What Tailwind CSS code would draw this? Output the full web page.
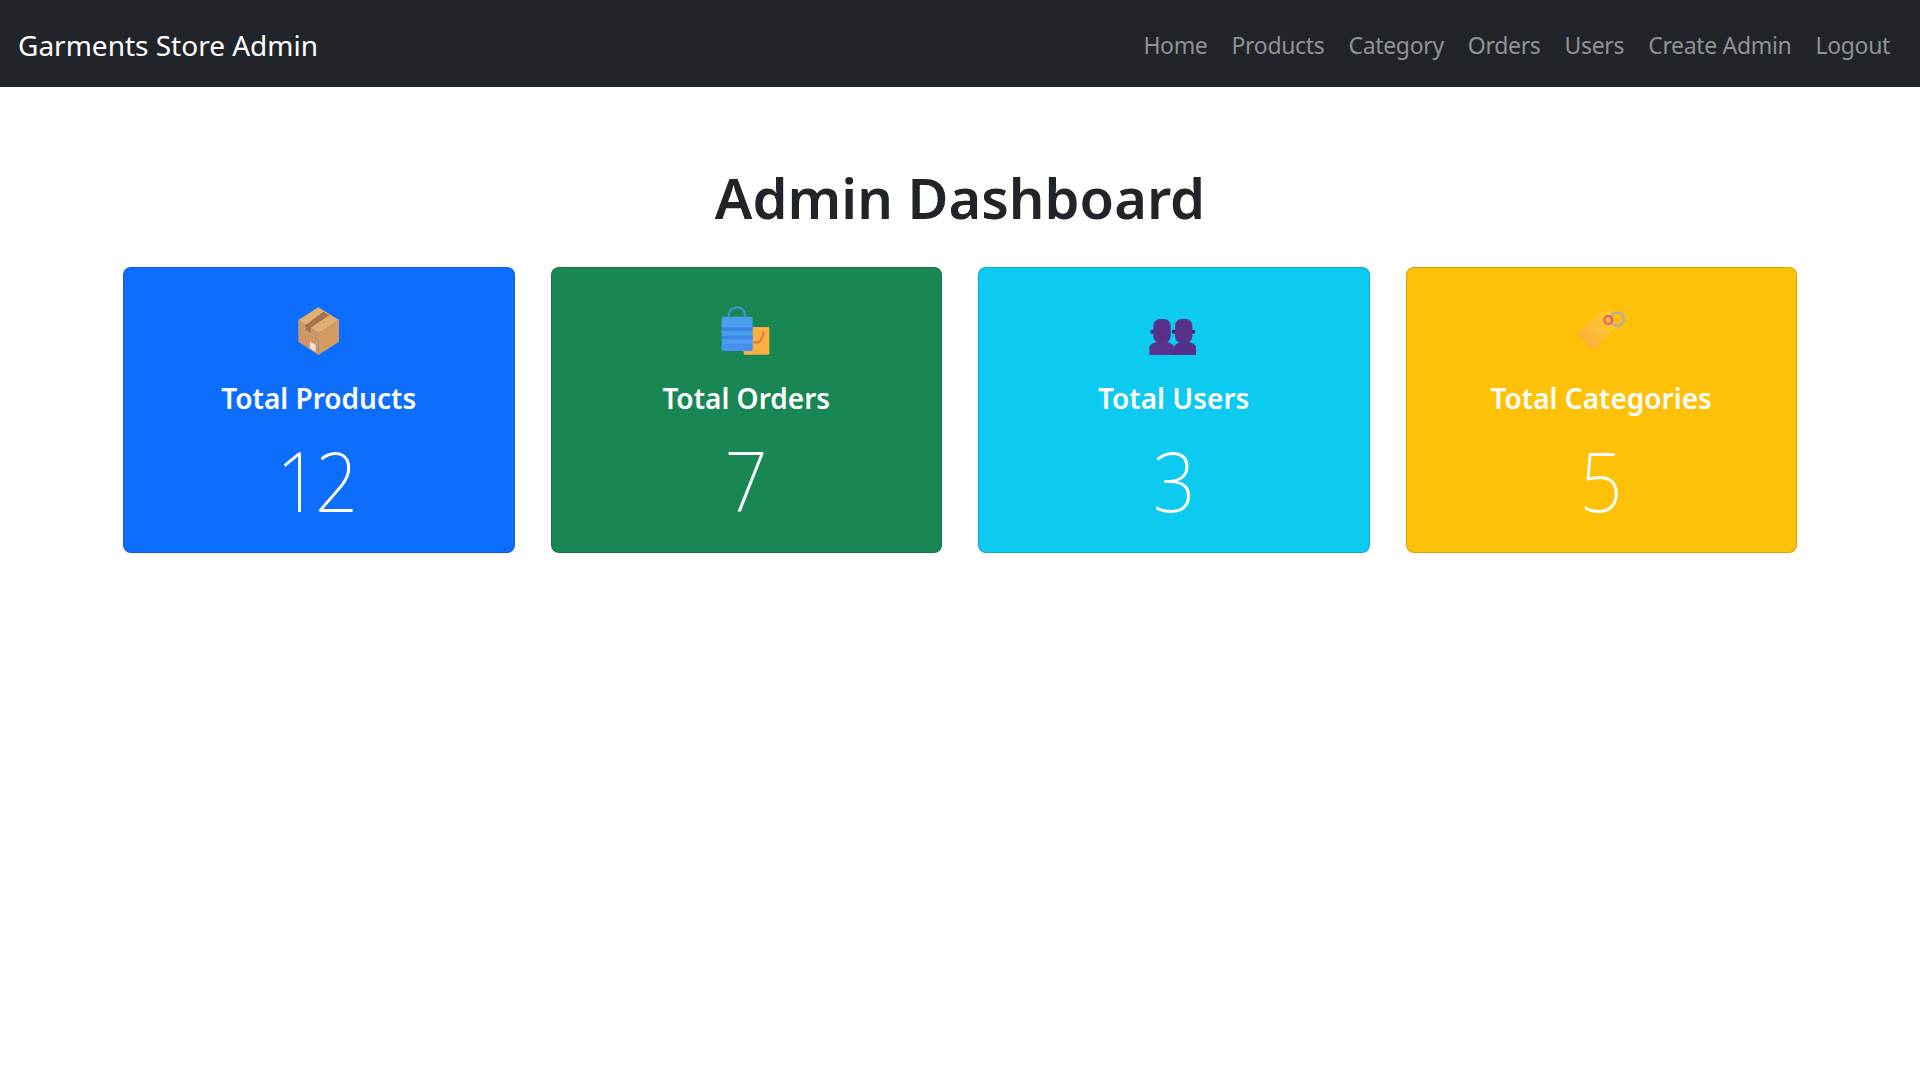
<!DOCTYPE html>
<html lang="en">
<head>
  <meta charset="UTF-8" />
  <title>Admin Dashboard</title>
  <script src="https://cdn.jsdelivr.net/npm/@tailwindcss/browser@4"></script>
</head>
<body class="bg-white text-[#212529] font-['Noto_Sans',sans-serif]">
  <nav class="bg-[#212529] h-[87px] flex items-center justify-between pl-[18px] pr-[30px] pt-[2px]">
    <a class="text-white text-[28px]">Garments Store Admin</a>
    <div class="flex gap-[24px] pt-[2px] text-[23px] tracking-[-0.33px] text-[#909294]">
      <a>Home</a>
      <a>Products</a>
      <a>Category</a>
      <a>Orders</a>
      <a>Users</a>
      <a>Create Admin</a>
      <a>Logout</a>
    </div>
  </nav>

  <main class="px-[123px]">
    <h1 class="text-center text-[56px] font-semibold leading-[72px] pt-[74px] pb-[34px]">Admin Dashboard</h1>

    <div class="grid grid-cols-4 gap-[36px]">
      <div class="bg-[#0d6efd] border border-black/15 rounded-[8px] h-[286px] text-white text-center pt-[37px]">
        <svg class="mx-auto w-[50px] h-[50px]" viewBox="72 45 150 150">
          <path d="M145 52 207 90 147 130 85 90Z" fill="#e3ae72"/>
          <path d="M85 90 147 130 145 195 85 155Z" fill="#cf9763"/>
          <path d="M147 130 207 90 207 155 145 195Z" fill="#d39b60"/>
          <path d="M160 65 178 76 122 113V130L107 120V105Z" fill="#a6714f"/>
          <path d="M120 155 137 165V185L120 175Z" fill="#f2e6de"/>
        </svg>
        <h4 class="text-[28px] font-semibold leading-[36px] mt-[25px]">Total Products</h4>
        <p class="text-[84px] font-extralight leading-[100px] mt-[14px]"><span class="inline-block scale-x-90 -translate-x-1 tracking-[-5px]">12</span></p>
      </div>

      <div class="bg-[#198754] border border-black/15 rounded-[8px] h-[286px] text-white text-center pt-[37px]">
        <svg class="mx-auto w-[50px] h-[50px]" viewBox="64 45 150 150" fill="none">
          <rect x="132" y="111" width="77" height="83" rx="4" fill="#fbb040"/>
          <path d="M160 156Q186 166 192 125" stroke="#e8704a" stroke-width="6"/>
          <path d="M87 100V80C87 42 137 42 137 80V100" stroke="#3a96e0" stroke-width="6"/>
          <rect x="66" y="80" width="93" height="103" rx="6" fill="#4a9ef0"/>
          <rect x="66" y="112" width="93" height="11" fill="#3c86e8"/>
          <rect x="66" y="137" width="93" height="11" fill="#3c86e8"/>
          <rect x="66" y="162" width="93" height="21" rx="6" fill="#4790f0"/>
        </svg>
        <h4 class="text-[28px] font-semibold leading-[36px] mt-[25px]">Total Orders</h4>
        <p class="text-[84px] font-extralight leading-[100px] mt-[14px]"><span class="inline-block scale-x-90">7</span></p>
      </div>

      <div class="bg-[#0dcaf0] border border-black/15 rounded-[8px] h-[286px] text-white text-center pt-[37px]">
        <svg class="mx-auto w-[50px] h-[50px]" viewBox="72 45 150 150" fill="#56308a">
          <circle cx="82" cy="125" r="6" fill="#3f2268"/>
          <circle cx="146" cy="125" r="6" fill="#3f2268"/>
          <circle cx="205" cy="125" r="6" fill="#3f2268"/>
          <rect x="85" y="87" width="52" height="72" rx="20"/>
          <rect x="150" y="87" width="52" height="72" rx="20"/>
          <path d="M73 195V172Q75 160 98 155H124Q145 160 147 172V195Z" fill="#5a3290"/>
          <path d="M147 195V172Q149 160 170 155H190Q211 160 213 172V195Z" fill="#54308a"/>
        </svg>
        <h4 class="text-[28px] font-semibold leading-[36px] mt-[25px]">Total Users</h4>
        <p class="text-[84px] font-extralight leading-[100px] mt-[14px]"><span class="inline-block scale-x-90">3</span></p>
      </div>

      <div class="bg-[#ffc107] border border-black/15 rounded-[8px] h-[286px] text-white text-center pt-[37px]">
        <svg class="mx-auto w-[50px] h-[50px]" viewBox="79 45 150 150" fill="none">
          <defs>
            <linearGradient id="tagFill" x1="0" y1="1" x2="1" y2="0">
              <stop offset="0" stop-color="#fda63f"/>
              <stop offset="1" stop-color="#ffd42a"/>
            </linearGradient>
          </defs>
          <path d="M82 132 150 68 180 60 197 112 130 183Z" fill="url(#tagFill)"/>
          <circle cx="203" cy="88" r="20" stroke="#b0aeb0" stroke-width="7"/>
          <circle cx="176" cy="90" r="12" stroke="#f0506a" stroke-width="6"/>
        </svg>
        <h4 class="text-[28px] font-semibold leading-[36px] mt-[25px]">Total Categories</h4>
        <p class="text-[84px] font-extralight leading-[100px] mt-[14px]"><span class="inline-block scale-x-90">5</span></p>
      </div>
    </div>
  </main>
</body>
</html>
